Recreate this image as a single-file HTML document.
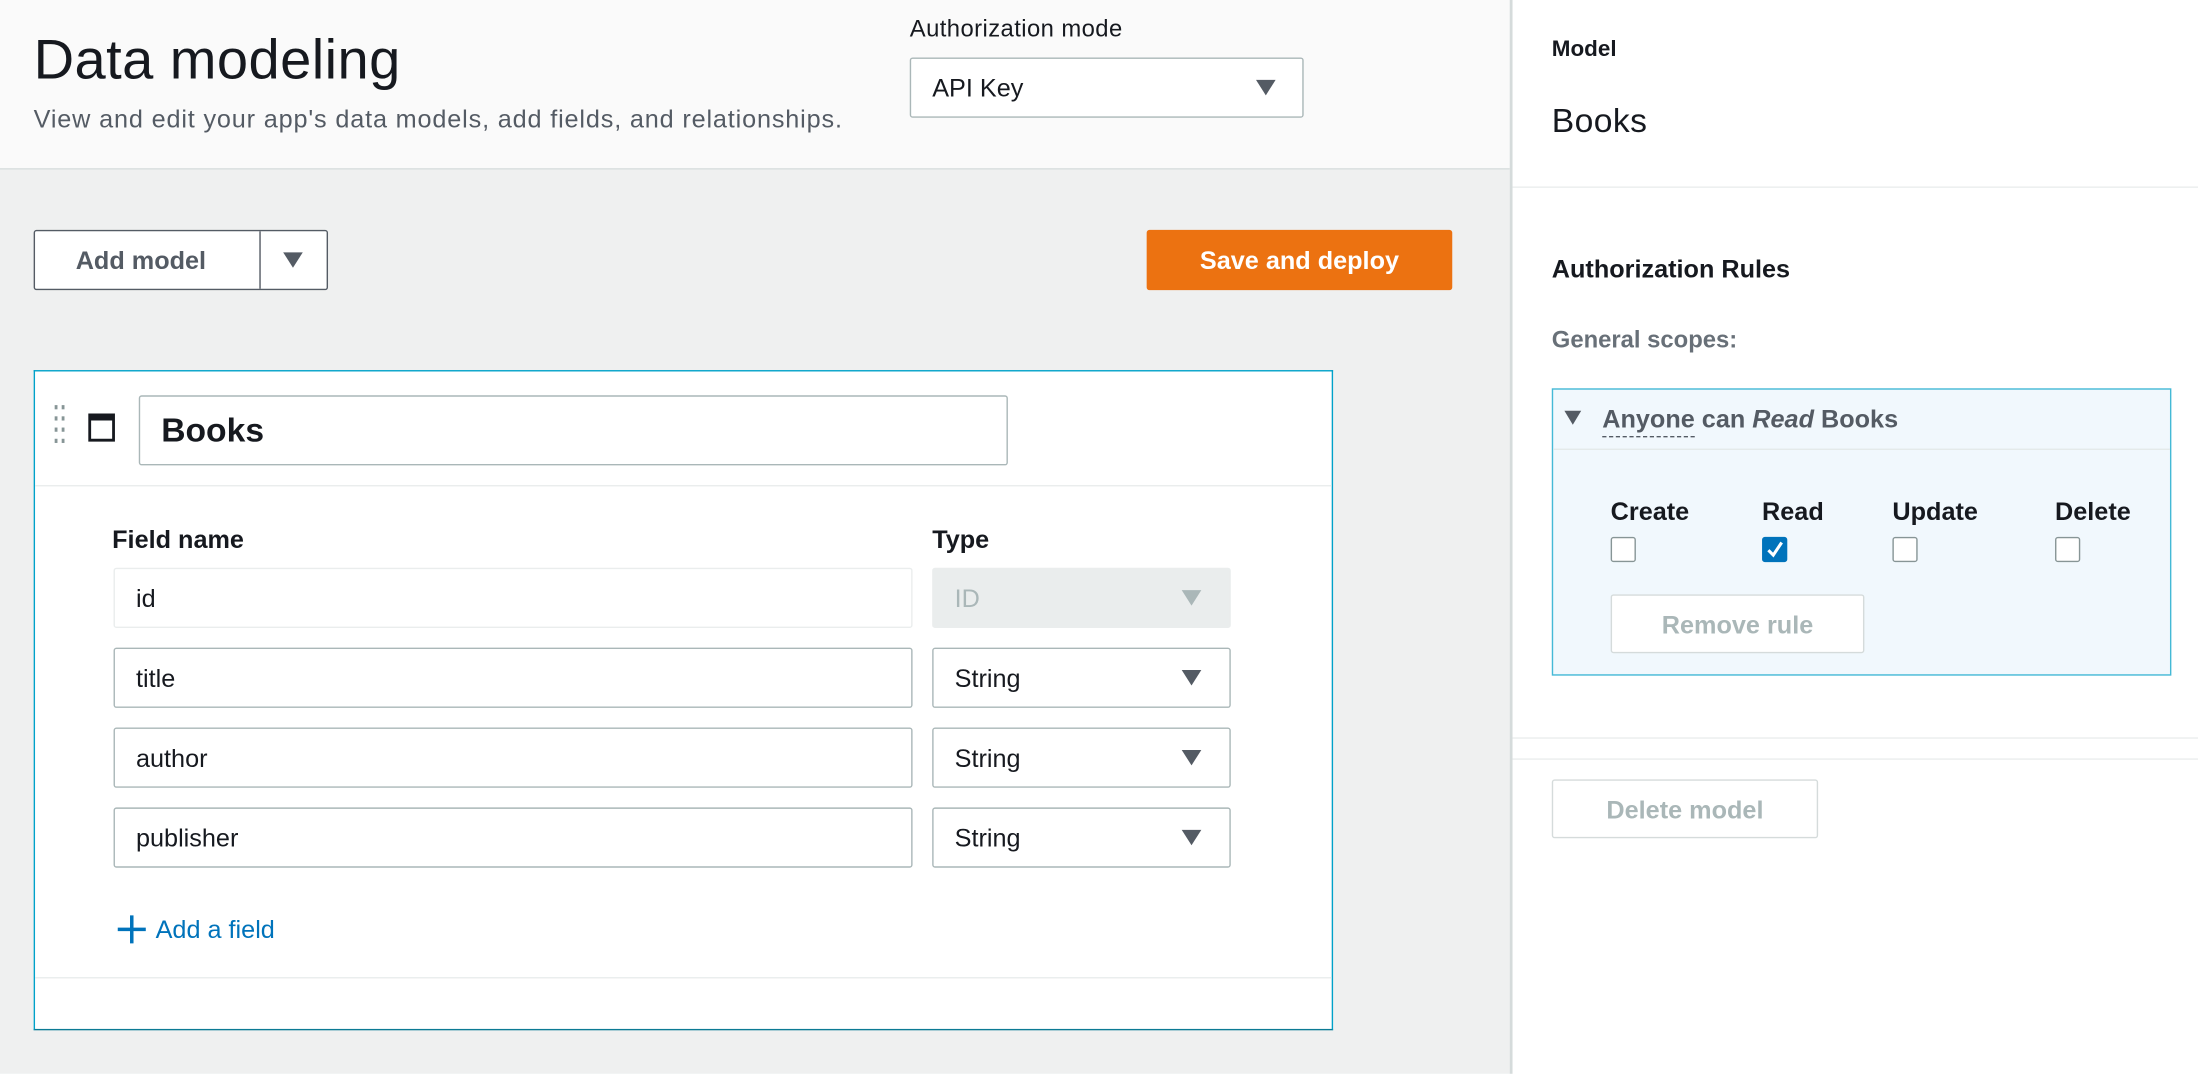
<!DOCTYPE html>
<html><head><meta charset="utf-8"><style>
html,body{margin:0;padding:0;width:2198px;height:1074px;overflow:hidden;background:#fff}
#w{position:absolute;left:0;top:0;width:1568px;height:766px;transform:scale(1.40179);transform-origin:0 0;font-family:"Liberation Sans",sans-serif;color:#16191f}
.a{position:absolute}
.inp{position:absolute;background:#fff;border:1px solid #aab7b8;border-radius:2px;box-sizing:border-box;font-size:18px;padding-left:15px;padding-top:2px;display:flex;align-items:center}
.car{position:absolute;width:0;height:0;border-left:7px solid transparent;border-right:7px solid transparent;border-top:11px solid #545b64}
.cb{position:absolute;width:18px;height:18px;box-sizing:border-box;border:1px solid #879596;border-radius:2px;background:#fff;top:383px}
.lbl{position:absolute;top:355px;font-size:18px;font-weight:bold}
.btn{position:absolute;box-sizing:border-box;border:1px solid #d5dbdb;border-radius:2px;background:#fff;color:#aab7b8;font-weight:bold;font-size:18px;display:flex;align-items:center;justify-content:center;padding-top:2px}
</style></head><body><div id="w">
<div class="a" style="left:0;top:0;width:1077px;height:120px;background:#fafafa;border-bottom:1px solid #d5dbdb"></div>
<div class="a" style="left:0;top:121px;width:1077px;height:645px;background:#eff0f0"></div>
<div class="a" style="left:1077px;top:0;width:2px;height:766px;background:#d5dbdb"></div>
<div class="a" style="left:24px;top:21px;font-size:40px;letter-spacing:0.3px">Data modeling</div>
<div class="a" style="left:24px;top:75px;font-size:18px;color:#545b64;letter-spacing:0.6px">View and edit your app's data models, add fields, and relationships.</div>
<div class="a" style="left:649px;top:11px;font-size:17px;letter-spacing:0.3px">Authorization mode</div>
<div class="inp" style="left:649px;top:41px;width:281px;height:43px">API Key</div>
<div class="car" style="left:896px;top:57px"></div>
<div class="a" style="left:24px;top:164px;width:208px;height:41px;border:1px solid #545b64;border-radius:2px;background:#fff"></div>
<div class="a" style="left:185px;top:165px;width:1px;height:41px;background:#545b64"></div>
<div class="a" style="left:54px;top:176px;font-size:18px;font-weight:bold;color:#545b64">Add model</div>
<div class="car" style="left:202px;top:180px"></div>
<div class="a" style="left:818px;top:164px;width:218px;height:43px;background:#ec7211;border-radius:2px;color:#fff;font-weight:bold;font-size:18px;display:flex;align-items:center;justify-content:center;padding-top:2px;box-sizing:border-box">Save and deploy</div>
<div class="a" style="left:24px;top:264px;width:925px;height:469px;background:#fff;border:1px solid #00a1c9;border-bottom-color:#0b7a94"></div>
<div class="a" style="left:25px;top:346px;width:925px;height:1px;background:#eaeded"></div>
<div class="a" style="left:25px;top:697px;width:925px;height:1px;background:#eaeded"></div>
<svg class="a" style="left:38px;top:288px" width="12" height="34"><g fill="#879596"><rect x="1" y="1" width="2" height="3"/><rect x="6" y="1" width="2" height="3"/><rect x="1" y="9" width="2" height="3"/><rect x="6" y="9" width="2" height="3"/><rect x="1" y="17" width="2" height="3"/><rect x="6" y="17" width="2" height="3"/><rect x="1" y="25" width="2" height="3"/><rect x="6" y="25" width="2" height="3"/></g></svg>
<div class="a" style="left:63px;top:295px;width:19px;height:20px;box-sizing:border-box;border:2px solid #16191f;border-top-width:5px"></div>
<div class="inp" style="left:99px;top:282px;width:620px;height:50px;font-size:24px;font-weight:bold">Books</div>
<div class="a" style="left:80px;top:375px;font-size:18px;font-weight:bold">Field name</div>
<div class="a" style="left:665px;top:375px;font-size:18px;font-weight:bold">Type</div>
<div class="inp" style="left:81px;top:405px;width:570px;height:43px;border-color:#eaeded">id</div>
<div class="inp" style="left:665px;top:405px;width:213px;height:43px;border-color:#eaeded;background:#eaeded;color:#aab7b8">ID</div>
<div class="car" style="left:843px;top:421px;border-top-color:#aab7b8"></div>
<div class="inp" style="left:81px;top:462px;width:570px;height:43px">title</div>
<div class="inp" style="left:665px;top:462px;width:213px;height:43px">String</div>
<div class="car" style="left:843px;top:478px"></div>
<div class="inp" style="left:81px;top:519px;width:570px;height:43px">author</div>
<div class="inp" style="left:665px;top:519px;width:213px;height:43px">String</div>
<div class="car" style="left:843px;top:535px"></div>
<div class="inp" style="left:81px;top:576px;width:570px;height:43px">publisher</div>
<div class="inp" style="left:665px;top:576px;width:213px;height:43px">String</div>
<div class="car" style="left:843px;top:592px"></div>
<svg class="a" style="left:83px;top:652px" width="22" height="22"><path d="M11 1V21M1 11H21" stroke="#0073bb" stroke-width="2.5"/></svg>
<div class="a" style="left:111px;top:653px;font-size:18px;color:#0073bb">Add a field</div>
<div class="a" style="left:1107px;top:27px;font-size:16px;font-weight:bold">Model</div>
<div class="a" style="left:1107px;top:73px;font-size:24px;letter-spacing:0.3px">Books</div>
<div class="a" style="left:1079px;top:133px;width:489px;height:1px;background:#eaeded"></div>
<div class="a" style="left:1107px;top:182px;font-size:18px;font-weight:bold">Authorization Rules</div>
<div class="a" style="left:1107px;top:233px;font-size:17px;font-weight:bold;color:#687078">General scopes:</div>
<div class="a" style="left:1107px;top:277px;width:440px;height:203px;background:#f1f8fd;border:1px solid #44b9d6"></div>
<div class="a" style="left:1108px;top:320px;width:440px;height:1px;background:#e4e9ea"></div>
<div class="car" style="left:1116px;top:293px;border-left-width:6px;border-right-width:6px;border-top-width:10px"></div>
<div class="a" style="left:1143px;top:289px;font-size:18px;font-weight:bold;color:#545b64"><span style="border-bottom:1px dashed #545b64;padding-bottom:2px">Anyone</span> can <i>Read</i> Books</div>
<div class="lbl" style="left:1149px">Create</div>
<div class="lbl" style="left:1257px">Read</div>
<div class="lbl" style="left:1350px">Update</div>
<div class="lbl" style="left:1466px">Delete</div>
<div class="cb" style="left:1149px"></div>
<div class="cb" style="left:1257px;background:#0073bb;border-color:#0073bb"><svg width="16" height="16" style="position:absolute;left:0;top:0"><path d="M3.5 8.5L7 12L13 3" stroke="#fff" stroke-width="2.2" fill="none"/></svg></div>
<div class="cb" style="left:1350px"></div>
<div class="cb" style="left:1466px"></div>
<div class="btn" style="left:1149px;top:424px;width:181px;height:42px">Remove rule</div>
<div class="a" style="left:1079px;top:526px;width:489px;height:1px;background:#eaeded"></div>
<div class="a" style="left:1079px;top:541px;width:489px;height:1px;background:#eaeded"></div>
<div class="btn" style="left:1107px;top:556px;width:190px;height:42px">Delete model</div>
</div></body></html>
